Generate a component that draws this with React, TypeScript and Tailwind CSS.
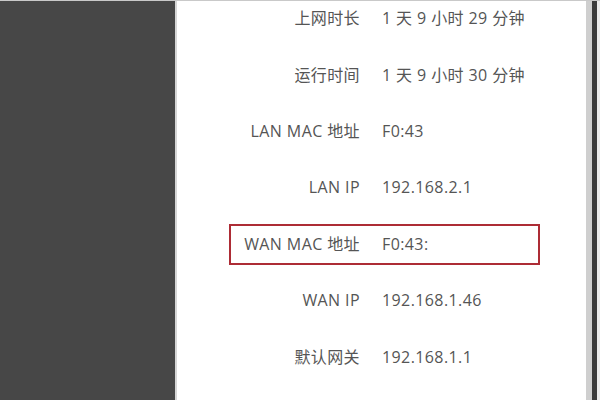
import React from 'react'

const rows = [
  { label: '上网时长', value: '1 天 9 小时 29 分钟' },
  { label: '运行时间', value: '1 天 9 小时 30 分钟' },
  { label: 'LAN MAC 地址', value: 'F0:43' },
  { label: 'LAN IP', value: '192.168.2.1' },
  { label: 'WAN MAC 地址', value: 'F0:43:', marked: true },
  { label: 'WAN IP', value: '192.168.1.46' },
  { label: '默认网关', value: '192.168.1.1' },
]

export default function App() {
  return (
    <div
      className="flex w-[600px] h-[400px] overflow-hidden bg-white border-t border-[#c9c9c9]"
      style={{ fontFamily: '"Open Sans", "Noto Sans CJK SC", sans-serif' }}
    >
      <div className="w-[175px] shrink-0 bg-[#474747]" />
      <div className="w-[2px] shrink-0 bg-[#d6d6d6]" />
      <div className="relative flex-1 bg-white">
        <div className="flex flex-col -mt-[11px]">
          {rows.map((r) => (
            <div key={r.label} className="relative flex items-center h-[56.4px] text-[16px] tracking-[0.4px] text-[#555]">
              <div className="w-[183px] shrink-0 text-right">{r.label}</div>
              <div className="pl-[22px]">{r.value}</div>
              {r.marked && (
                <div className="absolute left-[52px] top-[8px] w-[311px] h-[41px] border-2 border-[#ad2c35]" />
              )}
            </div>
          ))}
        </div>
      </div>
      <div className="w-[6px] shrink-0 bg-[#cfcfcf]" />
      <div className="w-[5px] shrink-0 bg-[#3c3c3c]" />
      <div className="w-[3px] shrink-0 bg-[#ececec]" />
    </div>
  )
}
